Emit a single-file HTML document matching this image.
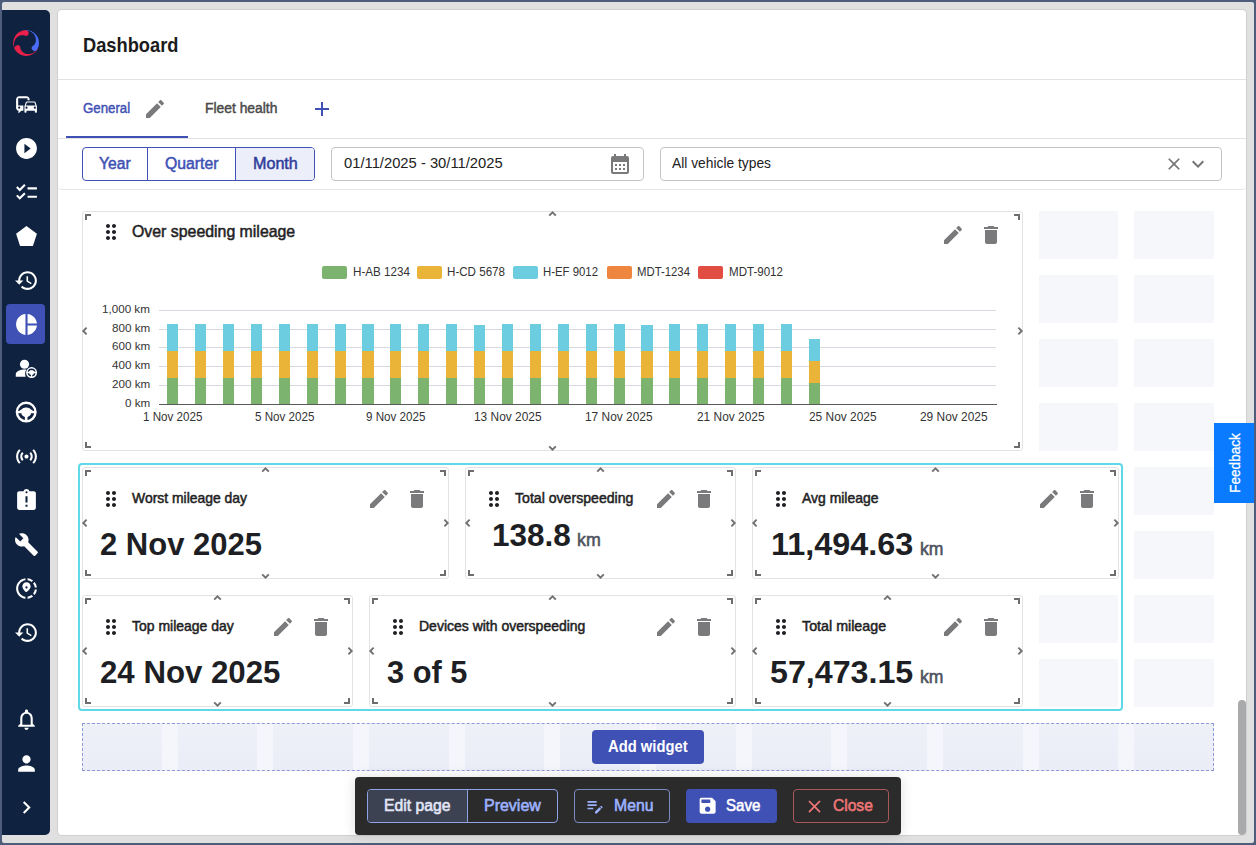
<!DOCTYPE html>
<html><head><meta charset="utf-8">
<style>
*{box-sizing:border-box;margin:0;padding:0}
html,body{width:1256px;height:845px;overflow:hidden;background:#4e5d7c;font-family:"Liberation Sans",sans-serif;}
.abs{position:absolute}
#frame{position:absolute;left:2px;top:2px;width:1252px;height:841px;background:#e0e0e0;border-radius:2px}
#side{position:absolute;left:2px;top:10px;width:48px;height:825px;background:#0f2240;border-radius:0 5px 5px 0}
#side svg{position:absolute;left:11.5px;width:25px;height:25px;fill:#fff}
#side .act{position:absolute;left:4px;top:294px;width:39px;height:40px;background:#3f51b5;border-radius:4px}
#card{position:absolute;left:58px;top:10px;width:1188px;height:825px;background:#fff;border-radius:4px;box-shadow:0 0 0 1px #cfcfcf;overflow:hidden}
.hl{position:absolute;height:1px;background:#e3e3e3}
.t{position:absolute;white-space:nowrap;line-height:1}
.t{position:absolute;white-space:nowrap;line-height:1;transform-origin:0 0}.b{position:absolute}.ic{position:absolute}.ov{position:absolute;left:0;top:0;pointer-events:none}</style></head><body>
<div id="frame"></div>
<div id="side">
  <!-- logo -->
  <svg style="left:11px;top:20px;width:26px;height:26px" viewBox="0 0 26 26">
    <path d="M2.41 20.21 L2.04 19.63 L1.70 19.04 L1.39 18.42 L1.12 17.79 L0.88 17.15 L0.68 16.49 L0.51 15.83 L0.38 15.15 L0.28 14.47 L0.22 13.79 L0.20 13.10 L0.21 12.41 L0.26 11.73 L0.35 11.05 L0.47 10.37 L0.63 9.70 L0.82 9.05 L1.05 8.40 L1.31 7.76 L1.61 7.14 L1.93 6.54 L2.29 5.96 L2.68 5.39 L3.10 4.85 L3.55 4.33 L4.03 3.83 L4.53 3.36 L5.05 2.92 L5.60 2.50 L6.17 2.12 L6.76 1.77 L7.36 1.45 L7.99 1.16 L8.62 0.90 L9.27 0.68 L9.94 0.49 L10.61 0.34 L11.28 0.23 L11.96 0.15 L12.65 0.11 A3.00 3.00 0 0 1 12.86 6.10 L12.47 5.87 L12.06 5.67 L11.62 5.50 L11.17 5.36 L10.69 5.25 L10.20 5.17 L9.70 5.13 L9.19 5.13 L8.68 5.17 L8.15 5.24 L7.63 5.35 L7.11 5.50 L6.59 5.68 L6.08 5.91 L5.58 6.17 L5.10 6.47 L4.63 6.81 L4.17 7.18 L3.74 7.59 L3.33 8.02 L2.95 8.49 L2.59 8.99 L2.27 9.51 L1.98 10.06 L1.72 10.63 L1.50 11.22 L1.31 11.83 L1.16 12.46 L1.06 13.09 L0.99 13.74 L0.97 14.39 L0.99 15.05 L1.05 15.71 L1.15 16.36 L1.30 17.01 L1.48 17.65 L1.72 18.27 L1.99 18.88 L2.30 19.48 L2.65 20.05 Z" fill="#e8204a"/>
    <path d="M12.65 0.11 L13.34 0.10 L14.02 0.13 L14.71 0.20 L15.38 0.30 L16.06 0.44 L16.72 0.62 L17.37 0.83 L18.02 1.07 L18.64 1.35 L19.26 1.66 L19.85 2.01 L20.43 2.38 L20.98 2.79 L21.51 3.22 L22.02 3.68 L22.50 4.17 L22.96 4.68 L23.39 5.22 L23.79 5.78 L24.16 6.36 L24.50 6.95 L24.80 7.57 L25.07 8.20 L25.31 8.84 L25.52 9.50 L25.68 10.16 L25.82 10.84 L25.91 11.52 L25.98 12.20 L26.00 12.89 L25.99 13.57 L25.94 14.26 L25.85 14.94 L25.73 15.62 L25.57 16.28 L25.38 16.94 L25.16 17.59 L24.89 18.23 L24.60 18.85 L24.27 19.45 A3.00 3.00 0 0 1 19.08 16.45 L19.48 16.24 L19.87 16.00 L20.25 15.72 L20.61 15.41 L20.95 15.07 L21.27 14.69 L21.57 14.29 L21.84 13.86 L22.09 13.40 L22.30 12.92 L22.49 12.42 L22.64 11.90 L22.75 11.36 L22.83 10.81 L22.87 10.24 L22.88 9.67 L22.84 9.09 L22.77 8.51 L22.65 7.93 L22.50 7.35 L22.30 6.78 L22.07 6.22 L21.80 5.66 L21.49 5.12 L21.14 4.60 L20.75 4.10 L20.34 3.62 L19.88 3.17 L19.40 2.74 L18.89 2.34 L18.35 1.97 L17.78 1.64 L17.19 1.35 L16.58 1.09 L15.96 0.87 L15.32 0.69 L14.66 0.55 L14.00 0.46 L13.33 0.41 L12.66 0.41 Z" fill="#4a6cf7"/>
    <path d="M24.69 18.65 L24.38 19.26 L24.03 19.86 L23.65 20.43 L23.24 20.98 L22.80 21.51 L22.33 22.01 L21.84 22.49 L21.32 22.94 L20.78 23.36 L20.22 23.76 L19.64 24.12 L19.04 24.45 L18.42 24.75 L17.79 25.02 L17.14 25.25 L16.48 25.45 L15.82 25.61 L15.14 25.74 L14.46 25.83 L13.78 25.88 L13.09 25.90 L12.40 25.88 L11.72 25.83 L11.04 25.73 L10.36 25.61 L9.70 25.44 L9.04 25.24 L8.39 25.01 L7.76 24.74 L7.14 24.44 L6.54 24.11 L5.96 23.74 L5.40 23.35 L4.86 22.93 L4.34 22.47 L3.85 21.99 L3.39 21.49 L2.95 20.96 L2.54 20.41 L2.16 19.84 A3.00 3.00 0 0 1 7.25 16.66 L7.24 17.11 L7.27 17.57 L7.34 18.03 L7.45 18.50 L7.59 18.96 L7.77 19.42 L7.99 19.87 L8.24 20.32 L8.53 20.75 L8.85 21.16 L9.21 21.56 L9.60 21.94 L10.02 22.29 L10.47 22.62 L10.95 22.92 L11.45 23.19 L11.98 23.43 L12.52 23.64 L13.09 23.81 L13.67 23.95 L14.27 24.05 L14.88 24.10 L15.49 24.12 L16.12 24.10 L16.74 24.04 L17.36 23.94 L17.98 23.79 L18.60 23.61 L19.20 23.38 L19.79 23.11 L20.37 22.81 L20.93 22.47 L21.47 22.09 L21.98 21.67 L22.47 21.22 L22.93 20.74 L23.36 20.22 L23.75 19.68 L24.11 19.11 L24.42 18.52 Z" fill="#e8204a"/>
  </svg>
  <div class="act"></div>
  <!-- commute -->
  <svg style="top:81.5px" viewBox="0 0 24 24"><path d="M12 4H5C3.34 4 2 5.34 2 7v8c0 1.66 1.34 3 3 3l-1 1v1h1l2-2.03L9 18v-5H4V5.98L13 6v2h2V7c0-1.66-1.34-3-3-3zM5 14c.55 0 1 .45 1 1s-.45 1-1 1-1-.45-1-1 .45-1 1-1zm15.57-4.34c-.14-.4-.52-.66-.97-.66h-7.19c-.46 0-.83.26-.98.66L10 13.77l.01 5.51c0 .38.31.72.69.72h.62c.38 0 .68-.38.68-.76V18h8v1.24c0 .38.31.76.69.76h.61c.38 0 .69-.34.69-.72l.01-1.37v-4.14l-1.43-4.11zm-8.16.34h7.19l1.03 3h-9.25l1.03-3zM12 16c-.55 0-1-.45-1-1s.45-1 1-1 1 .45 1 1-.45 1-1 1zm8 0c-.55 0-1-.45-1-1s.45-1 1-1 1 .45 1 1-.45 1-1 1z"/></svg>
  <!-- play -->
  <svg style="top:125.5px" viewBox="0 0 24 24"><path d="M12 2C6.48 2 2 6.48 2 12s4.48 10 10 10 10-4.48 10-10S17.52 2 12 2zm-2 14.5v-9l6 4.5-6 4.5z"/></svg>
  <!-- checklist -->
  <svg style="top:169.5px" viewBox="0 0 24 24"><path d="M22,7h-9v2h9V7z M22,15h-9v2h9V15z M5.54,11L2,7.46l1.41-1.41l2.12,2.12l4.24-4.24l1.41,1.41L5.54,11z M5.54,19L2,15.46l1.41-1.41 l2.12,2.12l4.24-4.24l1.41,1.41L5.54,19z"/></svg>
  <!-- pentagon -->
  <svg style="top:213.5px" viewBox="0 0 24 24"><path d="M22 9.24 12 2 2 9.24 5.82 21h12.36L22 9.24z"/></svg>
  <!-- history -->
  <svg style="top:257.5px" viewBox="0 0 24 24"><path d="M13 3c-4.97 0-9 4.03-9 9H1l3.89 3.89.07.14L9 12H6c0-3.87 3.13-7 7-7s7 3.13 7 7-3.13 7-7 7c-1.93 0-3.68-.79-4.94-2.06l-1.42 1.42C8.27 19.99 10.51 21 13 21c4.97 0 9-4.03 9-9s-4.03-9-9-9zm-1 5v5l4.28 2.54.72-1.21-3.5-2.08V8H12z"/></svg>
  <!-- pie -->
  <svg style="top:301.5px" viewBox="0 0 24 24"><path d="M11 2v20c-5.07-.5-9-4.79-9-10s3.93-9.5 9-10zm2.03 0v8.99H22c-.47-4.74-4.24-8.52-8.97-8.99zm0 11.01V22c4.74-.47 8.5-4.25 8.970-8.99h-8.97z"/></svg>
  <!-- person + wheel -->
  <svg style="top:345.5px" viewBox="0 0 24 24"><circle cx="10.1" cy="7.95" r="4.4"/><path d="M1.7 19.8v-2.2c0-2.9 4.6-4.7 8.3-4.7.6 0 1.3.05 2 .15-.9 1.2-1.3 2.6-1.3 4.1 0 .9.2 1.8.5 2.65z"/><circle cx="16.9" cy="15.85" r="4.5" fill="none" stroke="#fff" stroke-width="1.5"/><g transform="translate(16.9 15.85) scale(0.5) translate(-11.7 -11.6)"><path d="M4.9 10.6L9.1 7.7H14.3L18.5 10.6z M2.5 10.5H21V12.8H2.5z M10.45 12h2.5v9h-2.5z"/><circle cx="11.7" cy="11.9" r="4.7"/></g></svg>
  <!-- steering wheel -->
  <svg style="top:389.5px" viewBox="0 0 24 24"><circle cx="11.7" cy="11.6" r="8.95" fill="none" stroke="#fff" stroke-width="2.3"/><path d="M4.9 10.6L9.1 7.7H14.3L18.5 10.6z M2.5 10.5H21V12.8H2.5z M10.45 12h2.5v9h-2.5z"/><circle cx="11.7" cy="11.9" r="4.7"/></svg>
  <!-- sensors -->
  <svg style="top:433.5px" viewBox="0 0 24 24"><path d="M7.76 16.24C6.67 15.160 6 13.66 6 12s.67-3.16 1.76-4.24l1.42 1.42C8.45 9.9 8 10.9 8 12c0 1.1.45 2.1 1.170 2.83l-1.41 1.41zm8.48 0C17.33 15.16 18 13.66 18 12s-.67-3.16-1.76-4.24l-1.42 1.42C15.55 9.9 16 10.9 16 12c0 1.1-.45 2.1-1.17 2.83l1.41 1.41zM12 10c-1.1 0-2 .9-2 2s.9 2 2 2 2-.9 2-2-.9-2-2-2zm8 2c0 2.21-.9 4.21-2.35 5.65l1.42 1.42C20.88 17.26 22 14.76 22 12s-1.12-5.26-2.93-7.07l-1.42 1.42C19.1 7.79 20 9.79 20 12zM6.35 6.35L4.93 4.93C3.12 6.74 2 9.24 2 12s1.12 5.26 2.93 7.07l1.42-1.42C4.9 16.21 4 14.21 4 12s.9-4.21 2.35-5.65z"/></svg>
  <!-- assignment late -->
  <svg style="top:477.5px" viewBox="0 0 24 24"><path d="M19 3h-4.18C14.4 1.84 13.3 1 12 1c-1.3 0-2.4.84-2.82 2H5c-1.1 0-2 .9-2 2v14c0 1.1.9 2 2 2h14c1.1 0 2-.9 2-2V5c0-1.1-.9-2-2-2zm-6 15h-2v-2h2v2zm0-4h-2V8h2v6zm-1-9c-.55 0-1-.45-1-1s.45-1 1-1 1 .45 1 1-.45 1-1 1z"/></svg>
  <!-- build -->
  <svg style="top:521.5px" viewBox="0 0 24 24"><path d="M22.7 19l-9.1-9.1c.9-2.3.4-5-1.5-6.9-2-2-5-2.4-7.4-1.3L9 6 6 9 1.6 4.7C.4 7.1.9 10.1 2.9 12.1c1.9 1.9 4.6 2.4 6.9 1.5l9.1 9.1c.4.4 1 .4 1.4 0l2.3-2.3c.5-.4.5-1.1.1-1.4z"/></svg>
  <!-- share location -->
  <svg style="top:565.5px" viewBox="0 0 24 24"><path d="M13.02,19.93v2.02c2.01-0.2,3.84-1,5.32-2.21l-1.42-1.43C15.81,19.17,14.48,19.75,13.02,19.93z M4.03,12c0-4.05,3.03-7.41,6.95-7.93V2.05C5.95,2.58,2.03,6.84,2.03,12c0,5.16,3.920,9.42,8.95,9.95v-2.02C7.06,19.41,4.03,16.05,4.03,12z M19.95,11h2.02c-0.2-2.01-1-3.84-2.21-5.32l-1.43,1.43C19.17,8.19,19.75,9.52,19.95,11z M18.34,4.26c-1.48-1.21-3.32-2.01-5.32-2.21v2.02c1.46,0.18,2.79,0.76,3.9,1.62L18.34,4.26z M18.33,16.9l1.43,1.42c1.21-1.48,2.01-3.31,2.21-5.32h-2.02C19.77,14.48,19.19,15.81,18.33,16.9z M16,10.1C16,7.96,14.33,6,12,6s-4,1.96-4,4.1c0,1.28,0.98,3.12,3,5.01c0.4,0.37,1.03,0.37,1.43,0C15.02,13.22,16,11.38,16,10.1z M12,12c-0.59,0-1.07-0.48-1.07-1.07c0-0.59,0.48-1.07,1.07-1.07s1.07,0.48,1.07,1.07C13.07,11.52,12.59,12,12,12z"/></svg>
  <!-- history 2 -->
  <svg style="top:609.5px" viewBox="0 0 24 24"><path d="M13 3c-4.97 0-9 4.03-9 9H1l3.89 3.89.07.14L9 12H6c0-3.87 3.13-7 7-7s7 3.13 7 7-3.13 7-7 7c-1.93 0-3.68-.79-4.94-2.06l-1.42 1.42C8.27 19.99 10.51 21 13 21c4.97 0 9-4.03 9-9s-4.03-9-9-9zm-1 5v5l4.28 2.54.72-1.21-3.5-2.08V8H12z"/></svg>
  <!-- bell -->
  <svg style="top:696.5px" viewBox="0 0 24 24"><path d="M12 22c1.1 0 2-.9 2-2h-4c0 1.1.89 2 2 2zm6-6v-5c0-3.07-1.64-5.64-4.5-6.32V4c0-.83-.67-1.5-1.5-1.5s-1.5.67-1.5 1.5v.68C7.63 5.36 6 7.92 6 11v5l-2 2v1h16v-1l-2-2zm-2 1H8v-6c0-2.48 1.51-4.5 4-4.5s4 2.02 4 4.5v6z"/></svg>
  <!-- person -->
  <svg style="top:740.5px" viewBox="0 0 24 24"><path d="M12 12c2.21 0 4-1.79 4-4s-1.79-4-4-4-4 1.79-4 4 1.79 4 4 4zm0 2c-2.67 0-8 1.34-8 4v2h16v-2c0-2.66-5.33-4-8-4z"/></svg>
  <!-- chevron -->
  <svg style="top:784.5px" viewBox="0 0 24 24"><path d="M10 6L8.59 7.41 13.17 12l-4.58 4.59L10 18l6-6z"/></svg>
</div>
<div id="card"></div>
<div class="b" style="left:58.00px;top:79.00px;width:1188.00px;height:1.00px;background:#e2e2e2"></div>
<div class="t" style="left:82.50px;top:34.00px;font-size:21.00px;color:#1b1b1b;font-weight:700;transform:scaleX(0.8704);">Dashboard</div>
<div class="t" style="left:82.60px;top:101.00px;font-size:14.75px;color:#3f51b5;font-weight:400;transform:scaleX(0.8989);-webkit-text-stroke:0.45px #3f51b5;">General</div>
<svg class="ic" style="left:143.20px;top:96.90px;width:24.00px;height:24.00px;" viewBox="0 0 24 24"><path fill="#7a7a7c" d="M3 17.25V21h3.75L17.81 9.94l-3.75-3.75L3 17.25zM20.71 7.04c.39-.39.39-1.02 0-1.41l-2.34-2.34c-.39-.39-1.02-.39-1.41 0l-1.83 1.830 3.75 3.75 1.83-1.83z"/></svg>
<div class="b" style="left:66.00px;top:136.00px;width:122.00px;height:2.00px;background:#3f51b5"></div>
<div class="b" style="left:58.00px;top:138.00px;width:1188.00px;height:1.00px;background:#e2e2e2"></div>
<div class="t" style="left:205.20px;top:101.00px;font-size:14.25px;color:#4a4a4a;font-weight:400;transform:scaleX(0.9724);-webkit-text-stroke:0.45px #4a4a4a;">Fleet health</div>
<svg class="ic" style="left:310.00px;top:97.00px;width:24.00px;height:24.00px;" viewBox="0 0 24 24"><path fill="#3f51b5" d="M19 13h-6v6h-2v-6H5v-2h6V5h2v6h6v2z"/></svg>
<div class="b" style="left:82.00px;top:147.00px;width:233.00px;height:34.00px;border:1px solid #3f51b5;border-radius:4px;background:#fff"></div>
<div class="b" style="left:236.00px;top:148.00px;width:78.00px;height:32.00px;background:#eceefa;border-radius:0 3px 3px 0"></div>
<div class="b" style="left:147.00px;top:148.00px;width:1.00px;height:32.00px;background:#3f51b5"></div>
<div class="b" style="left:235.00px;top:148.00px;width:1.00px;height:32.00px;background:#3f51b5"></div>
<div class="t" style="left:99.40px;top:156.00px;font-size:16.00px;color:#3f51b5;font-weight:400;transform:scaleX(0.9777);-webkit-text-stroke:0.50px #3f51b5;">Year</div>
<div class="t" style="left:165.00px;top:156.00px;font-size:16.00px;color:#3f51b5;font-weight:400;transform:scaleX(0.9864);-webkit-text-stroke:0.50px #3f51b5;">Quarter</div>
<div class="t" style="left:252.50px;top:156.00px;font-size:16.00px;color:#2f3d9a;font-weight:400;transform:scaleX(1.0072);-webkit-text-stroke:0.50px #2f3d9a;">Month</div>
<div class="b" style="left:331.00px;top:147.00px;width:313.00px;height:34.00px;border:1px solid #c4c4c4;border-radius:4px"></div>
<div class="t" style="left:343.60px;top:157.00px;font-size:13.75px;color:#222;font-weight:400;transform:scaleX(1.0737);">01/11/2025 - 30/11/2025</div>
<svg class="ic" style="left:608.00px;top:152.00px;width:24.00px;height:24.00px;" viewBox="0 0 24 24"><path fill="#7a7a7c" d="M19 4h-1V2h-2v2H8V2H6v2H5c-1.11 0-1.99.9-1.99 2L3 20c0 1.1.89 2 2 2h14c1.1 0 2-.9 2-2V6c0-1.1-.9-2-2-2zm0 16H5V10h14v10zM9 14H7v-2h2v2zm4 0h-2v-2h2v2zm4 0h-2v-2h2v2zm-8 4H7v-2h2v2zm4 0h-2v-2h2v2zm4 0h-2v-2h2v2z"/></svg>
<div class="b" style="left:660.00px;top:147.00px;width:562.00px;height:34.00px;border:1px solid #c4c4c4;border-radius:4px"></div>
<div class="t" style="left:672.20px;top:157.00px;font-size:13.75px;color:#222;font-weight:400;transform:scaleX(1.0042);">All vehicle types</div>
<svg class="ic" style="left:1164.00px;top:154.00px;width:20.00px;height:20.00px;" viewBox="0 0 24 24"><path fill="#757575" d="M19 6.41L17.59 5 12 10.59 6.41 5 5 6.41 10.59 12 5 17.59 6.41 19 12 13.41 17.590 19 19 17.59 13.41 12z"/></svg>
<svg class="ic" style="left:1186.00px;top:152.00px;width:24.00px;height:24.00px;" viewBox="0 0 24 24"><path fill="#757575" d="M7.41 8.59L12 13.17l4.59-4.58L18 10l-6 6-6-6 1.41-1.41z"/></svg>
<div class="b" style="left:58.00px;top:170.00px;width:1188.00px;height:20.00px;border-bottom:1px solid #e6e6e6;border-radius:0 0 4px 4px"></div>
<div class="b" style="left:1039.00px;top:211.00px;width:79.00px;height:48.00px;background:#f6f7fb"></div>
<div class="b" style="left:1134.00px;top:211.00px;width:80.00px;height:48.00px;background:#f6f7fb"></div>
<div class="b" style="left:1039.00px;top:275.00px;width:79.00px;height:48.00px;background:#f6f7fb"></div>
<div class="b" style="left:1134.00px;top:275.00px;width:80.00px;height:48.00px;background:#f6f7fb"></div>
<div class="b" style="left:1039.00px;top:339.00px;width:79.00px;height:48.00px;background:#f6f7fb"></div>
<div class="b" style="left:1134.00px;top:339.00px;width:80.00px;height:48.00px;background:#f6f7fb"></div>
<div class="b" style="left:1039.00px;top:403.00px;width:79.00px;height:48.00px;background:#f6f7fb"></div>
<div class="b" style="left:1134.00px;top:403.00px;width:80.00px;height:48.00px;background:#f6f7fb"></div>
<div class="b" style="left:1134.00px;top:467.00px;width:80.00px;height:48.00px;background:#f6f7fb"></div>
<div class="b" style="left:1134.00px;top:531.00px;width:80.00px;height:48.00px;background:#f6f7fb"></div>
<div class="b" style="left:1039.00px;top:595.00px;width:79.00px;height:48.00px;background:#f6f7fb"></div>
<div class="b" style="left:1134.00px;top:595.00px;width:80.00px;height:48.00px;background:#f6f7fb"></div>
<div class="b" style="left:1039.00px;top:659.00px;width:79.00px;height:48.00px;background:#f6f7fb"></div>
<div class="b" style="left:1134.00px;top:659.00px;width:80.00px;height:48.00px;background:#f6f7fb"></div>
<div class="b" style="left:82.00px;top:723.00px;width:1132.00px;height:48.00px;background:#f5f6fb"></div>
<div class="b" style="left:82.00px;top:723.00px;width:80.00px;height:48.00px;background:linear-gradient(#eff1f9,#eaecf7)"></div>
<div class="b" style="left:178.00px;top:723.00px;width:79.00px;height:48.00px;background:linear-gradient(#eff1f9,#eaecf7)"></div>
<div class="b" style="left:273.00px;top:723.00px;width:80.00px;height:48.00px;background:linear-gradient(#eff1f9,#eaecf7)"></div>
<div class="b" style="left:369.00px;top:723.00px;width:80.00px;height:48.00px;background:linear-gradient(#eff1f9,#eaecf7)"></div>
<div class="b" style="left:465.00px;top:723.00px;width:79.00px;height:48.00px;background:linear-gradient(#eff1f9,#eaecf7)"></div>
<div class="b" style="left:560.00px;top:723.00px;width:80.00px;height:48.00px;background:linear-gradient(#eff1f9,#eaecf7)"></div>
<div class="b" style="left:656.00px;top:723.00px;width:80.00px;height:48.00px;background:linear-gradient(#eff1f9,#eaecf7)"></div>
<div class="b" style="left:752.00px;top:723.00px;width:79.00px;height:48.00px;background:linear-gradient(#eff1f9,#eaecf7)"></div>
<div class="b" style="left:847.00px;top:723.00px;width:80.00px;height:48.00px;background:linear-gradient(#eff1f9,#eaecf7)"></div>
<div class="b" style="left:943.00px;top:723.00px;width:80.00px;height:48.00px;background:linear-gradient(#eff1f9,#eaecf7)"></div>
<div class="b" style="left:1039.00px;top:723.00px;width:79.00px;height:48.00px;background:linear-gradient(#eff1f9,#eaecf7)"></div>
<div class="b" style="left:1134.00px;top:723.00px;width:80.00px;height:48.00px;background:linear-gradient(#eff1f9,#eaecf7)"></div>
<div class="b" style="left:82.00px;top:723.00px;width:1132.00px;height:48.00px;border:1px dashed #8f99d8"></div>
<div class="b" style="left:78.00px;top:463.00px;width:1045.00px;height:248.00px;border:2px solid #5fd9e8;border-radius:4px"></div>
<div class="b" style="left:82.00px;top:211.00px;width:941.00px;height:240.00px;border:1px solid #e3e3e3;border-radius:3px;background:#fff"></div>
<svg class="ov" width="1256" height="845"><path d="M86.0 220.0 V215.0 H91.0 M1014.0 215.0 H1019.0 V220.0 M86.0 442.0 V447.0 H91.0 M1014.0 447.0 H1019.0 V442.0" fill="none" stroke="#6d6d6d" stroke-width="2" stroke-linecap="butt"/><path d="M549.20 215.60 L552.50 212.30 L555.80 215.60 M549.20 446.40 L552.50 449.70 L555.80 446.40 M86.60 327.70 L83.30 331.00 L86.60 334.30 M1018.40 327.70 L1021.70 331.00 L1018.40 334.30" fill="none" stroke="#707070" stroke-width="1.9"/></svg>
<svg class="ic" style="left:98.70px;top:220.10px;width:24.00px;height:24.00px;" viewBox="0 0 24 24"><path fill="#1f1f24" d="M11 18c0 1.1-.9 2-2 2s-2-.9-2-2 .9-2 2-2 2 .9 2 2zm-2-8c-1.1 0-2 .9-2 2s.9 2 2 2 2-.9 2-2-.9-2-2-2zm0-6c-1.1 0-2 .9-2 2s.9 2 2 2 2-.9 2-2-.9-2-2-2zm6 4c1.1 0 2-.9 2-2s-.9-2-2-2-2 .9-2 2 .9 2 2 2zm0 2c-1.1 0-2 .9-2 2s.9 2 2 2 2-.9 2-2-.9-2-2-2zm0 6c-1.1 0-2 .9-2 2s.9 2 2 2 2-.9 2-2-.9-2-2-2z"/></svg>
<div class="t" style="left:131.50px;top:224.00px;font-size:15.75px;color:#1f1f24;font-weight:400;transform:scaleX(1.0075);-webkit-text-stroke:0.50px #1f1f24;">Over speeding mileage</div>
<svg class="ic" style="left:941.00px;top:223.00px;width:24.00px;height:24.00px;" viewBox="0 0 24 24"><path fill="#7a7a7c" d="M3 17.25V21h3.75L17.81 9.94l-3.75-3.75L3 17.25zM20.71 7.04c.39-.39.39-1.02 0-1.41l-2.34-2.34c-.39-.39-1.02-.39-1.41 0l-1.83 1.830 3.75 3.75 1.83-1.83z"/></svg>
<svg class="ic" style="left:979.00px;top:223.00px;width:24.00px;height:24.00px;" viewBox="0 0 24 24"><path fill="#7a7a7c" d="M6 19c0 1.1.9 2 2 2h8c1.1 0 2-.9 2-2V7H6v12zM19 4h-3.5l-1-1h-5l-1 1H5v2h14V4z"/></svg>
<div class="b" style="left:82.00px;top:467.00px;width:367.00px;height:112.00px;border:1px solid #e3e3e3;border-radius:3px;background:#fff"></div>
<svg class="ov" width="1256" height="845"><path d="M86.0 476.0 V471.0 H91.0 M440.0 471.0 H445.0 V476.0 M86.0 570.0 V575.0 H91.0 M440.0 575.0 H445.0 V570.0" fill="none" stroke="#6d6d6d" stroke-width="2" stroke-linecap="butt"/><path d="M262.20 471.60 L265.50 468.30 L268.80 471.60 M262.20 574.40 L265.50 577.70 L268.80 574.40 M86.60 519.70 L83.30 523.00 L86.60 526.30 M444.40 519.70 L447.70 523.00 L444.40 526.30" fill="none" stroke="#707070" stroke-width="1.9"/></svg>
<svg class="ic" style="left:98.70px;top:486.70px;width:24.00px;height:24.00px;" viewBox="0 0 24 24"><path fill="#1f1f24" d="M11 18c0 1.1-.9 2-2 2s-2-.9-2-2 .9-2 2-2 2 .9 2 2zm-2-8c-1.1 0-2 .9-2 2s.9 2 2 2 2-.9 2-2-.9-2-2-2zm0-6c-1.1 0-2 .9-2 2s.9 2 2 2 2-.9 2-2-.9-2-2-2zm6 4c1.1 0 2-.9 2-2s-.9-2-2-2-2 .9-2 2 .9 2 2 2zm0 2c-1.1 0-2 .9-2 2s.9 2 2 2 2-.9 2-2-.9-2-2-2zm0 6c-1.1 0-2 .9-2 2s.9 2 2 2 2-.9 2-2-.9-2-2-2z"/></svg>
<div class="t" style="left:131.50px;top:492.00px;font-size:13.75px;color:#1f1f24;font-weight:400;transform:scaleX(1.0128);-webkit-text-stroke:0.50px #1f1f24;">Worst mileage day</div>
<svg class="ic" style="left:367.00px;top:487.00px;width:24.00px;height:24.00px;" viewBox="0 0 24 24"><path fill="#7a7a7c" d="M3 17.25V21h3.75L17.81 9.94l-3.75-3.75L3 17.25zM20.71 7.04c.39-.39.39-1.02 0-1.41l-2.34-2.34c-.39-.39-1.02-.39-1.41 0l-1.83 1.830 3.75 3.75 1.83-1.83z"/></svg>
<svg class="ic" style="left:405.00px;top:487.00px;width:24.00px;height:24.00px;" viewBox="0 0 24 24"><path fill="#7a7a7c" d="M6 19c0 1.1.9 2 2 2h8c1.1 0 2-.9 2-2V7H6v12zM19 4h-3.5l-1-1h-5l-1 1H5v2h14V4z"/></svg>
<div class="b" style="left:465.00px;top:467.00px;width:271.00px;height:112.00px;border:1px solid #e3e3e3;border-radius:3px;background:#fff"></div>
<svg class="ov" width="1256" height="845"><path d="M469.0 476.0 V471.0 H474.0 M727.0 471.0 H732.0 V476.0 M469.0 570.0 V575.0 H474.0 M727.0 575.0 H732.0 V570.0" fill="none" stroke="#6d6d6d" stroke-width="2" stroke-linecap="butt"/><path d="M597.20 471.60 L600.50 468.30 L603.80 471.60 M597.20 574.40 L600.50 577.70 L603.80 574.40 M469.60 519.70 L466.30 523.00 L469.60 526.30 M731.40 519.70 L734.70 523.00 L731.40 526.30" fill="none" stroke="#707070" stroke-width="1.9"/></svg>
<svg class="ic" style="left:481.70px;top:487.00px;width:24.00px;height:24.00px;" viewBox="0 0 24 24"><path fill="#1f1f24" d="M11 18c0 1.1-.9 2-2 2s-2-.9-2-2 .9-2 2-2 2 .9 2 2zm-2-8c-1.1 0-2 .9-2 2s.9 2 2 2 2-.9 2-2-.9-2-2-2zm0-6c-1.1 0-2 .9-2 2s.9 2 2 2 2-.9 2-2-.9-2-2-2zm6 4c1.1 0 2-.9 2-2s-.9-2-2-2-2 .9-2 2 .9 2 2 2zm0 2c-1.1 0-2 .9-2 2s.9 2 2 2 2-.9 2-2-.9-2-2-2zm0 6c-1.1 0-2 .9-2 2s.9 2 2 2 2-.9 2-2-.9-2-2-2z"/></svg>
<div class="t" style="left:514.50px;top:492.00px;font-size:13.75px;color:#1f1f24;font-weight:400;transform:scaleX(1.0257);-webkit-text-stroke:0.50px #1f1f24;">Total overspeeding</div>
<svg class="ic" style="left:654.00px;top:487.00px;width:24.00px;height:24.00px;" viewBox="0 0 24 24"><path fill="#7a7a7c" d="M3 17.25V21h3.75L17.81 9.94l-3.75-3.75L3 17.25zM20.71 7.04c.39-.39.39-1.02 0-1.41l-2.34-2.34c-.39-.39-1.02-.39-1.41 0l-1.83 1.830 3.75 3.75 1.83-1.83z"/></svg>
<svg class="ic" style="left:692.00px;top:487.00px;width:24.00px;height:24.00px;" viewBox="0 0 24 24"><path fill="#7a7a7c" d="M6 19c0 1.1.9 2 2 2h8c1.1 0 2-.9 2-2V7H6v12zM19 4h-3.5l-1-1h-5l-1 1H5v2h14V4z"/></svg>
<div class="b" style="left:752.00px;top:467.00px;width:367.00px;height:112.00px;border:1px solid #e3e3e3;border-radius:3px;background:#fff"></div>
<svg class="ov" width="1256" height="845"><path d="M756.0 476.0 V471.0 H761.0 M1110.0 471.0 H1115.0 V476.0 M756.0 570.0 V575.0 H761.0 M1110.0 575.0 H1115.0 V570.0" fill="none" stroke="#6d6d6d" stroke-width="2" stroke-linecap="butt"/><path d="M932.20 471.60 L935.50 468.30 L938.80 471.60 M932.20 574.40 L935.50 577.70 L938.80 574.40 M756.60 519.70 L753.30 523.00 L756.60 526.30 M1114.40 519.70 L1117.70 523.00 L1114.40 526.30" fill="none" stroke="#707070" stroke-width="1.9"/></svg>
<svg class="ic" style="left:768.70px;top:487.00px;width:24.00px;height:24.00px;" viewBox="0 0 24 24"><path fill="#1f1f24" d="M11 18c0 1.1-.9 2-2 2s-2-.9-2-2 .9-2 2-2 2 .9 2 2zm-2-8c-1.1 0-2 .9-2 2s.9 2 2 2 2-.9 2-2-.9-2-2-2zm0-6c-1.1 0-2 .9-2 2s.9 2 2 2 2-.9 2-2-.9-2-2-2zm6 4c1.1 0 2-.9 2-2s-.9-2-2-2-2 .9-2 2 .9 2 2 2zm0 2c-1.1 0-2 .9-2 2s.9 2 2 2 2-.9 2-2-.9-2-2-2zm0 6c-1.1 0-2 .9-2 2s.9 2 2 2 2-.9 2-2-.9-2-2-2z"/></svg>
<div class="t" style="left:801.50px;top:492.00px;font-size:13.75px;color:#1f1f24;font-weight:400;transform:scaleX(1.0143);-webkit-text-stroke:0.50px #1f1f24;">Avg mileage</div>
<svg class="ic" style="left:1037.00px;top:487.00px;width:24.00px;height:24.00px;" viewBox="0 0 24 24"><path fill="#7a7a7c" d="M3 17.25V21h3.75L17.81 9.94l-3.75-3.75L3 17.25zM20.71 7.04c.39-.39.39-1.02 0-1.41l-2.34-2.34c-.39-.39-1.02-.39-1.41 0l-1.83 1.830 3.75 3.75 1.83-1.83z"/></svg>
<svg class="ic" style="left:1075.00px;top:487.00px;width:24.00px;height:24.00px;" viewBox="0 0 24 24"><path fill="#7a7a7c" d="M6 19c0 1.1.9 2 2 2h8c1.1 0 2-.9 2-2V7H6v12zM19 4h-3.5l-1-1h-5l-1 1H5v2h14V4z"/></svg>
<div class="b" style="left:82.00px;top:595.00px;width:271.00px;height:112.00px;border:1px solid #e3e3e3;border-radius:3px;background:#fff"></div>
<svg class="ov" width="1256" height="845"><path d="M86.0 604.0 V599.0 H91.0 M344.0 599.0 H349.0 V604.0 M86.0 698.0 V703.0 H91.0 M344.0 703.0 H349.0 V698.0" fill="none" stroke="#6d6d6d" stroke-width="2" stroke-linecap="butt"/><path d="M214.20 599.60 L217.50 596.30 L220.80 599.60 M214.20 702.40 L217.50 705.70 L220.80 702.40 M86.60 647.70 L83.30 651.00 L86.60 654.30 M348.40 647.70 L351.70 651.00 L348.40 654.30" fill="none" stroke="#707070" stroke-width="1.9"/></svg>
<svg class="ic" style="left:98.70px;top:615.00px;width:24.00px;height:24.00px;" viewBox="0 0 24 24"><path fill="#1f1f24" d="M11 18c0 1.1-.9 2-2 2s-2-.9-2-2 .9-2 2-2 2 .9 2 2zm-2-8c-1.1 0-2 .9-2 2s.9 2 2 2 2-.9 2-2-.9-2-2-2zm0-6c-1.1 0-2 .9-2 2s.9 2 2 2 2-.9 2-2-.9-2-2-2zm6 4c1.1 0 2-.9 2-2s-.9-2-2-2-2 .9-2 2 .9 2 2 2zm0 2c-1.1 0-2 .9-2 2s.9 2 2 2 2-.9 2-2-.9-2-2-2zm0 6c-1.1 0-2 .9-2 2s.9 2 2 2 2-.9 2-2-.9-2-2-2z"/></svg>
<div class="t" style="left:131.50px;top:620.00px;font-size:13.75px;color:#1f1f24;font-weight:400;transform:scaleX(1.0160);-webkit-text-stroke:0.50px #1f1f24;">Top mileage day</div>
<svg class="ic" style="left:271.00px;top:615.00px;width:24.00px;height:24.00px;" viewBox="0 0 24 24"><path fill="#7a7a7c" d="M3 17.25V21h3.75L17.81 9.94l-3.75-3.75L3 17.25zM20.71 7.04c.39-.39.39-1.02 0-1.41l-2.34-2.34c-.39-.39-1.02-.39-1.41 0l-1.83 1.830 3.75 3.75 1.83-1.83z"/></svg>
<svg class="ic" style="left:309.00px;top:615.00px;width:24.00px;height:24.00px;" viewBox="0 0 24 24"><path fill="#7a7a7c" d="M6 19c0 1.1.9 2 2 2h8c1.1 0 2-.9 2-2V7H6v12zM19 4h-3.5l-1-1h-5l-1 1H5v2h14V4z"/></svg>
<div class="b" style="left:369.00px;top:595.00px;width:367.00px;height:112.00px;border:1px solid #e3e3e3;border-radius:3px;background:#fff"></div>
<svg class="ov" width="1256" height="845"><path d="M373.0 604.0 V599.0 H378.0 M727.0 599.0 H732.0 V604.0 M373.0 698.0 V703.0 H378.0 M727.0 703.0 H732.0 V698.0" fill="none" stroke="#6d6d6d" stroke-width="2" stroke-linecap="butt"/><path d="M549.20 599.60 L552.50 596.30 L555.80 599.60 M549.20 702.40 L552.50 705.70 L555.80 702.40 M373.60 647.70 L370.30 651.00 L373.60 654.30 M731.40 647.70 L734.70 651.00 L731.40 654.30" fill="none" stroke="#707070" stroke-width="1.9"/></svg>
<svg class="ic" style="left:385.70px;top:615.00px;width:24.00px;height:24.00px;" viewBox="0 0 24 24"><path fill="#1f1f24" d="M11 18c0 1.1-.9 2-2 2s-2-.9-2-2 .9-2 2-2 2 .9 2 2zm-2-8c-1.1 0-2 .9-2 2s.9 2 2 2 2-.9 2-2-.9-2-2-2zm0-6c-1.1 0-2 .9-2 2s.9 2 2 2 2-.9 2-2-.9-2-2-2zm6 4c1.1 0 2-.9 2-2s-.9-2-2-2-2 .9-2 2 .9 2 2 2zm0 2c-1.1 0-2 .9-2 2s.9 2 2 2 2-.9 2-2-.9-2-2-2zm0 6c-1.1 0-2 .9-2 2s.9 2 2 2 2-.9 2-2-.9-2-2-2z"/></svg>
<div class="t" style="left:418.50px;top:620.00px;font-size:13.75px;color:#1f1f24;font-weight:400;transform:scaleX(1.0174);-webkit-text-stroke:0.50px #1f1f24;">Devices with overspeeding</div>
<svg class="ic" style="left:654.00px;top:615.00px;width:24.00px;height:24.00px;" viewBox="0 0 24 24"><path fill="#7a7a7c" d="M3 17.25V21h3.75L17.81 9.94l-3.75-3.75L3 17.25zM20.71 7.04c.39-.39.39-1.02 0-1.41l-2.34-2.34c-.39-.39-1.02-.39-1.41 0l-1.83 1.830 3.75 3.75 1.83-1.83z"/></svg>
<svg class="ic" style="left:692.00px;top:615.00px;width:24.00px;height:24.00px;" viewBox="0 0 24 24"><path fill="#7a7a7c" d="M6 19c0 1.1.9 2 2 2h8c1.1 0 2-.9 2-2V7H6v12zM19 4h-3.5l-1-1h-5l-1 1H5v2h14V4z"/></svg>
<div class="b" style="left:752.00px;top:595.00px;width:271.00px;height:112.00px;border:1px solid #e3e3e3;border-radius:3px;background:#fff"></div>
<svg class="ov" width="1256" height="845"><path d="M756.0 604.0 V599.0 H761.0 M1014.0 599.0 H1019.0 V604.0 M756.0 698.0 V703.0 H761.0 M1014.0 703.0 H1019.0 V698.0" fill="none" stroke="#6d6d6d" stroke-width="2" stroke-linecap="butt"/><path d="M884.20 599.60 L887.50 596.30 L890.80 599.60 M884.20 702.40 L887.50 705.70 L890.80 702.40 M756.60 647.70 L753.30 651.00 L756.60 654.30 M1018.40 647.70 L1021.70 651.00 L1018.40 654.30" fill="none" stroke="#707070" stroke-width="1.9"/></svg>
<svg class="ic" style="left:768.70px;top:615.00px;width:24.00px;height:24.00px;" viewBox="0 0 24 24"><path fill="#1f1f24" d="M11 18c0 1.1-.9 2-2 2s-2-.9-2-2 .9-2 2-2 2 .9 2 2zm-2-8c-1.1 0-2 .9-2 2s.9 2 2 2 2-.9 2-2-.9-2-2-2zm0-6c-1.1 0-2 .9-2 2s.9 2 2 2 2-.9 2-2-.9-2-2-2zm6 4c1.1 0 2-.9 2-2s-.9-2-2-2-2 .9-2 2 .9 2 2 2zm0 2c-1.1 0-2 .9-2 2s.9 2 2 2 2-.9 2-2-.9-2-2-2zm0 6c-1.1 0-2 .9-2 2s.9 2 2 2 2-.9 2-2-.9-2-2-2z"/></svg>
<div class="t" style="left:801.50px;top:620.00px;font-size:13.75px;color:#1f1f24;font-weight:400;transform:scaleX(1.0384);-webkit-text-stroke:0.50px #1f1f24;">Total mileage</div>
<svg class="ic" style="left:941.00px;top:615.00px;width:24.00px;height:24.00px;" viewBox="0 0 24 24"><path fill="#7a7a7c" d="M3 17.25V21h3.75L17.81 9.94l-3.75-3.75L3 17.25zM20.71 7.04c.39-.39.39-1.02 0-1.41l-2.34-2.34c-.39-.39-1.02-.39-1.41 0l-1.83 1.830 3.75 3.75 1.83-1.83z"/></svg>
<svg class="ic" style="left:979.00px;top:615.00px;width:24.00px;height:24.00px;" viewBox="0 0 24 24"><path fill="#7a7a7c" d="M6 19c0 1.1.9 2 2 2h8c1.1 0 2-.9 2-2V7H6v12zM19 4h-3.5l-1-1h-5l-1 1H5v2h14V4z"/></svg>
<div class="t" style="left:100.00px;top:529.00px;font-size:31.50px;color:#1d1f24;font-weight:700;transform:scaleX(0.9843);">2 Nov 2025</div>
<div class="t" style="left:492.10px;top:520.00px;font-size:31.25px;color:#1d1f24;font-weight:700;transform:scaleX(1.0079);">138.8</div>
<div class="t" style="left:577.00px;top:530.00px;font-size:19.25px;color:#4f5361;font-weight:400;transform:scaleX(0.9261);-webkit-text-stroke:0.60px #4f5361;">km</div>
<div class="t" style="left:771.30px;top:529.00px;font-size:31.75px;color:#1d1f24;font-weight:700;transform:scaleX(1.0198);">11,494.63</div>
<div class="t" style="left:919.50px;top:539.00px;font-size:19.25px;color:#4f5361;font-weight:400;transform:scaleX(0.9144);-webkit-text-stroke:0.60px #4f5361;">km</div>
<div class="t" style="left:100.10px;top:656.00px;font-size:32.00px;color:#1d1f24;font-weight:700;transform:scaleX(0.9753);">24 Nov 2025</div>
<div class="t" style="left:386.70px;top:656.00px;font-size:32.00px;color:#1d1f24;font-weight:700;transform:scaleX(0.9614);">3 of 5</div>
<div class="t" style="left:770.30px;top:657.00px;font-size:31.75px;color:#1d1f24;font-weight:700;transform:scaleX(1.0142);">57,473.15</div>
<div class="t" style="left:919.50px;top:667.00px;font-size:19.25px;color:#4f5361;font-weight:400;transform:scaleX(0.9144);-webkit-text-stroke:0.60px #4f5361;">km</div>
<div class="b" style="left:321.90px;top:265.50px;width:25.00px;height:13.50px;background:#7cb46f;border-radius:2px"></div>
<div class="t" style="left:352.50px;top:266.00px;font-size:12.50px;color:#333;font-weight:400;transform:scaleX(0.9325);">H-AB 1234</div>
<div class="b" style="left:417.40px;top:265.50px;width:25.00px;height:13.50px;background:#e9b437;border-radius:2px"></div>
<div class="t" style="left:447.00px;top:266.00px;font-size:12.50px;color:#333;font-weight:400;transform:scaleX(0.9280);">H-CD 5678</div>
<div class="b" style="left:513.00px;top:265.50px;width:25.00px;height:13.50px;background:#6ccde0;border-radius:2px"></div>
<div class="t" style="left:543.00px;top:266.00px;font-size:12.50px;color:#333;font-weight:400;transform:scaleX(0.9100);">H-EF 9012</div>
<div class="b" style="left:606.50px;top:265.50px;width:25.00px;height:13.50px;background:#ef8640;border-radius:2px"></div>
<div class="t" style="left:637.00px;top:266.00px;font-size:12.50px;color:#333;font-weight:400;transform:scaleX(0.9079);">MDT-1234</div>
<div class="b" style="left:698.00px;top:265.50px;width:25.00px;height:13.50px;background:#e14c43;border-radius:2px"></div>
<div class="t" style="left:729.00px;top:266.00px;font-size:12.50px;color:#333;font-weight:400;transform:scaleX(0.9251);">MDT-9012</div>
<div class="b" style="left:159.00px;top:309.70px;width:837.00px;height:1.20px;background:#d6dae0"></div>
<div class="b" style="left:159.00px;top:328.50px;width:837.00px;height:1.20px;background:#d6dae0"></div>
<div class="b" style="left:159.00px;top:347.30px;width:837.00px;height:1.20px;background:#d6dae0"></div>
<div class="b" style="left:159.00px;top:366.10px;width:837.00px;height:1.20px;background:#d6dae0"></div>
<div class="b" style="left:159.00px;top:384.90px;width:837.00px;height:1.20px;background:#d6dae0"></div>
<div class="b" style="left:158.50px;top:403.50px;width:838.00px;height:1.30px;background:#5a5a5a"></div>
<div class="t" style="left:102.33px;top:303.00px;font-size:11.75px;color:#333;font-weight:400;transform:scaleX(0.9901);">1,000 km</div>
<div class="t" style="left:112.04px;top:322.00px;font-size:11.75px;color:#333;font-weight:400;transform:scaleX(0.9901);">800 km</div>
<div class="t" style="left:112.04px;top:340.00px;font-size:11.75px;color:#333;font-weight:400;transform:scaleX(0.9901);">600 km</div>
<div class="t" style="left:112.04px;top:359.00px;font-size:11.75px;color:#333;font-weight:400;transform:scaleX(0.9901);">400 km</div>
<div class="t" style="left:112.04px;top:378.00px;font-size:11.75px;color:#333;font-weight:400;transform:scaleX(0.9901);">200 km</div>
<div class="t" style="left:125.01px;top:397.00px;font-size:11.75px;color:#333;font-weight:400;transform:scaleX(0.9901);">0 km</div>
<div class="b" style="left:167.10px;top:377.67px;width:11.20px;height:26.33px;background:#7cb46f"></div>
<div class="b" style="left:167.10px;top:350.93px;width:11.20px;height:26.74px;background:#e9b437"></div>
<div class="b" style="left:167.10px;top:324.23px;width:11.20px;height:26.69px;background:#6ccde0"></div>
<div class="b" style="left:195.00px;top:377.85px;width:11.20px;height:26.15px;background:#7cb46f"></div>
<div class="b" style="left:195.00px;top:350.98px;width:11.20px;height:26.88px;background:#e9b437"></div>
<div class="b" style="left:195.00px;top:324.08px;width:11.20px;height:26.89px;background:#6ccde0"></div>
<div class="b" style="left:222.90px;top:377.56px;width:11.20px;height:26.44px;background:#7cb46f"></div>
<div class="b" style="left:222.90px;top:351.10px;width:11.20px;height:26.45px;background:#e9b437"></div>
<div class="b" style="left:222.90px;top:324.18px;width:11.20px;height:26.92px;background:#6ccde0"></div>
<div class="b" style="left:250.80px;top:377.67px;width:11.20px;height:26.33px;background:#7cb46f"></div>
<div class="b" style="left:250.80px;top:351.20px;width:11.20px;height:26.47px;background:#e9b437"></div>
<div class="b" style="left:250.80px;top:324.29px;width:11.20px;height:26.91px;background:#6ccde0"></div>
<div class="b" style="left:278.70px;top:377.97px;width:11.20px;height:26.03px;background:#7cb46f"></div>
<div class="b" style="left:278.70px;top:350.89px;width:11.20px;height:27.08px;background:#e9b437"></div>
<div class="b" style="left:278.70px;top:324.37px;width:11.20px;height:26.52px;background:#6ccde0"></div>
<div class="b" style="left:306.60px;top:377.63px;width:11.20px;height:26.37px;background:#7cb46f"></div>
<div class="b" style="left:306.60px;top:350.98px;width:11.20px;height:26.64px;background:#e9b437"></div>
<div class="b" style="left:306.60px;top:324.48px;width:11.20px;height:26.50px;background:#6ccde0"></div>
<div class="b" style="left:334.50px;top:377.81px;width:11.20px;height:26.19px;background:#7cb46f"></div>
<div class="b" style="left:334.50px;top:351.04px;width:11.20px;height:26.77px;background:#e9b437"></div>
<div class="b" style="left:334.50px;top:324.39px;width:11.20px;height:26.66px;background:#6ccde0"></div>
<div class="b" style="left:362.40px;top:377.58px;width:11.20px;height:26.42px;background:#7cb46f"></div>
<div class="b" style="left:362.40px;top:351.05px;width:11.20px;height:26.53px;background:#e9b437"></div>
<div class="b" style="left:362.40px;top:324.35px;width:11.20px;height:26.71px;background:#6ccde0"></div>
<div class="b" style="left:390.30px;top:377.70px;width:11.20px;height:26.30px;background:#7cb46f"></div>
<div class="b" style="left:390.30px;top:350.62px;width:11.20px;height:27.08px;background:#e9b437"></div>
<div class="b" style="left:390.30px;top:324.48px;width:11.20px;height:26.14px;background:#6ccde0"></div>
<div class="b" style="left:418.20px;top:377.79px;width:11.20px;height:26.21px;background:#7cb46f"></div>
<div class="b" style="left:418.20px;top:351.03px;width:11.20px;height:26.76px;background:#e9b437"></div>
<div class="b" style="left:418.20px;top:324.49px;width:11.20px;height:26.54px;background:#6ccde0"></div>
<div class="b" style="left:446.10px;top:377.91px;width:11.20px;height:26.09px;background:#7cb46f"></div>
<div class="b" style="left:446.10px;top:351.15px;width:11.20px;height:26.75px;background:#e9b437"></div>
<div class="b" style="left:446.10px;top:324.25px;width:11.20px;height:26.91px;background:#6ccde0"></div>
<div class="b" style="left:474.00px;top:377.95px;width:11.20px;height:26.05px;background:#7cb46f"></div>
<div class="b" style="left:474.00px;top:350.87px;width:11.20px;height:27.08px;background:#e9b437"></div>
<div class="b" style="left:474.00px;top:324.52px;width:11.20px;height:26.35px;background:#6ccde0"></div>
<div class="b" style="left:501.90px;top:377.99px;width:11.20px;height:26.01px;background:#7cb46f"></div>
<div class="b" style="left:501.90px;top:350.66px;width:11.20px;height:27.33px;background:#e9b437"></div>
<div class="b" style="left:501.90px;top:324.12px;width:11.20px;height:26.54px;background:#6ccde0"></div>
<div class="b" style="left:529.80px;top:377.66px;width:11.20px;height:26.34px;background:#7cb46f"></div>
<div class="b" style="left:529.80px;top:351.18px;width:11.20px;height:26.48px;background:#e9b437"></div>
<div class="b" style="left:529.80px;top:324.27px;width:11.20px;height:26.91px;background:#6ccde0"></div>
<div class="b" style="left:557.70px;top:377.86px;width:11.20px;height:26.14px;background:#7cb46f"></div>
<div class="b" style="left:557.70px;top:350.78px;width:11.20px;height:27.08px;background:#e9b437"></div>
<div class="b" style="left:557.70px;top:324.30px;width:11.20px;height:26.48px;background:#6ccde0"></div>
<div class="b" style="left:585.60px;top:377.74px;width:11.20px;height:26.26px;background:#7cb46f"></div>
<div class="b" style="left:585.60px;top:350.81px;width:11.20px;height:26.93px;background:#e9b437"></div>
<div class="b" style="left:585.60px;top:324.34px;width:11.20px;height:26.47px;background:#6ccde0"></div>
<div class="b" style="left:613.50px;top:377.84px;width:11.20px;height:26.16px;background:#7cb46f"></div>
<div class="b" style="left:613.50px;top:351.14px;width:11.20px;height:26.70px;background:#e9b437"></div>
<div class="b" style="left:613.50px;top:324.39px;width:11.20px;height:26.75px;background:#6ccde0"></div>
<div class="b" style="left:641.40px;top:378.01px;width:11.20px;height:25.99px;background:#7cb46f"></div>
<div class="b" style="left:641.40px;top:351.11px;width:11.20px;height:26.90px;background:#e9b437"></div>
<div class="b" style="left:641.40px;top:324.55px;width:11.20px;height:26.57px;background:#6ccde0"></div>
<div class="b" style="left:669.30px;top:377.89px;width:11.20px;height:26.11px;background:#7cb46f"></div>
<div class="b" style="left:669.30px;top:350.70px;width:11.20px;height:27.19px;background:#e9b437"></div>
<div class="b" style="left:669.30px;top:324.48px;width:11.20px;height:26.22px;background:#6ccde0"></div>
<div class="b" style="left:697.20px;top:378.03px;width:11.20px;height:25.97px;background:#7cb46f"></div>
<div class="b" style="left:697.20px;top:351.14px;width:11.20px;height:26.89px;background:#e9b437"></div>
<div class="b" style="left:697.20px;top:324.33px;width:11.20px;height:26.81px;background:#6ccde0"></div>
<div class="b" style="left:725.10px;top:377.91px;width:11.20px;height:26.09px;background:#7cb46f"></div>
<div class="b" style="left:725.10px;top:350.73px;width:11.20px;height:27.18px;background:#e9b437"></div>
<div class="b" style="left:725.10px;top:324.47px;width:11.20px;height:26.26px;background:#6ccde0"></div>
<div class="b" style="left:753.00px;top:377.84px;width:11.20px;height:26.16px;background:#7cb46f"></div>
<div class="b" style="left:753.00px;top:350.77px;width:11.20px;height:27.07px;background:#e9b437"></div>
<div class="b" style="left:753.00px;top:324.08px;width:11.20px;height:26.69px;background:#6ccde0"></div>
<div class="b" style="left:780.90px;top:377.98px;width:11.20px;height:26.02px;background:#7cb46f"></div>
<div class="b" style="left:780.90px;top:351.19px;width:11.20px;height:26.78px;background:#e9b437"></div>
<div class="b" style="left:780.90px;top:324.09px;width:11.20px;height:27.10px;background:#6ccde0"></div>
<div class="b" style="left:808.80px;top:383.00px;width:11.20px;height:21.00px;background:#7cb46f"></div>
<div class="b" style="left:808.80px;top:361.10px;width:11.20px;height:21.90px;background:#e9b437"></div>
<div class="b" style="left:808.80px;top:339.10px;width:11.20px;height:22.00px;background:#6ccde0"></div>
<div class="t" style="left:143.00px;top:411.00px;font-size:12.25px;color:#333;font-weight:400;transform:scaleX(0.9480);">1 Nov 2025</div>
<div class="t" style="left:254.60px;top:411.00px;font-size:12.25px;color:#333;font-weight:400;transform:scaleX(0.9480);">5 Nov 2025</div>
<div class="t" style="left:366.20px;top:411.00px;font-size:12.25px;color:#333;font-weight:400;transform:scaleX(0.9480);">9 Nov 2025</div>
<div class="t" style="left:473.75px;top:411.00px;font-size:12.25px;color:#333;font-weight:400;transform:scaleX(0.9718);">13 Nov 2025</div>
<div class="t" style="left:585.35px;top:411.00px;font-size:12.25px;color:#333;font-weight:400;transform:scaleX(0.9718);">17 Nov 2025</div>
<div class="t" style="left:696.95px;top:411.00px;font-size:12.25px;color:#333;font-weight:400;transform:scaleX(0.9718);">21 Nov 2025</div>
<div class="t" style="left:808.55px;top:411.00px;font-size:12.25px;color:#333;font-weight:400;transform:scaleX(0.9718);">25 Nov 2025</div>
<div class="t" style="left:920.15px;top:411.00px;font-size:12.25px;color:#333;font-weight:400;transform:scaleX(0.9718);">29 Nov 2025</div>
<div class="b" style="left:592.00px;top:730.00px;width:112.00px;height:34.00px;background:#3f51b5;border-radius:4px"></div>
<div class="t" style="left:608.40px;top:739.00px;font-size:16.00px;color:#fff;font-weight:700;transform:scaleX(0.9242);">Add widget</div>
<div class="b" style="left:355.00px;top:777.00px;width:546.00px;height:58.00px;background:#2b2b2b;border-radius:4px;box-shadow:0 0 14px rgba(0,0,0,.13)"></div>
<div class="b" style="left:367.00px;top:789.00px;width:191.00px;height:34.00px;border:1px solid #8fa3e8;border-radius:4px"></div>
<div class="b" style="left:368.00px;top:790.00px;width:99.00px;height:32.00px;background:#3d4252;border-radius:3px 0 0 3px"></div>
<div class="b" style="left:467.00px;top:790.00px;width:1.00px;height:32.00px;background:#8fa3e8"></div>
<div class="t" style="left:383.90px;top:798.00px;font-size:16.00px;color:#e2e7f7;font-weight:400;transform:scaleX(0.9822);-webkit-text-stroke:0.60px #e2e7f7;">Edit page</div>
<div class="t" style="left:483.70px;top:798.00px;font-size:16.00px;color:#9db2ff;font-weight:400;transform:scaleX(0.9989);-webkit-text-stroke:0.60px #9db2ff;">Preview</div>
<div class="b" style="left:574.00px;top:789.00px;width:96.00px;height:34.00px;border:1px solid #7b89c2;border-radius:4px"></div>
<svg class="ic" style="left:585.20px;top:795.80px;width:20.00px;height:20.00px;" viewBox="0 0 24 24"><path fill="#9db2ff" d="M3 10h11v2H3zm0-2h11V6H3zm0 8h7v-2H3zm15.01-3.13.71-.71c.39-.39 1.02-.39 1.41 0l.71.71c.39.39.39 1.02 0 1.41l-.71.71-2.12-2.12zm-.71.71-5.3 5.3V21h2.12l5.3-5.3-2.12-2.12z"/></svg>
<div class="t" style="left:614.00px;top:797.00px;font-size:16.50px;color:#9db2ff;font-weight:400;transform:scaleX(0.9552);-webkit-text-stroke:0.60px #9db2ff;">Menu</div>
<div class="b" style="left:686.00px;top:789.00px;width:91.00px;height:34.00px;background:#3f51b5;border-radius:4px"></div>
<svg class="ic" style="left:697.30px;top:795.40px;width:21.30px;height:21.30px;" viewBox="0 0 24 24"><path fill="#fff" d="M17 3H5c-1.11 0-2 .9-2 2v14c0 1.1.89 2 2 2h14c1.1 0 2-.9 2-2V7l-4-4zm-5 16c-1.66 0-3-1.34-3-3s1.34-3 3-3 3 1.34 3 3-1.34 3-3 3zm3-10H5V5h10v4z"/></svg>
<div class="t" style="left:726.20px;top:798.00px;font-size:15.75px;color:#fff;font-weight:400;transform:scaleX(0.9580);-webkit-text-stroke:0.55px #fff;">Save</div>
<div class="b" style="left:793.00px;top:789.00px;width:96.00px;height:34.00px;border:1px solid #a9585a;border-radius:4px"></div>
<svg class="ic" style="left:804.20px;top:795.50px;width:21.00px;height:21.00px;" viewBox="0 0 24 24"><path fill="#ef7676" d="M19 6.41L17.59 5 12 10.59 6.41 5 5 6.41 10.59 12 5 17.59 6.41 19 12 13.41 17.590 19 19 17.59 13.41 12z"/></svg>
<div class="t" style="left:833.20px;top:797.00px;font-size:17.00px;color:#ef7676;font-weight:400;transform:scaleX(0.9163);-webkit-text-stroke:0.60px #ef7676;">Close</div>
<div class="b" style="left:1238.00px;top:700.00px;width:8.00px;height:135.00px;background:#a9aaac;border-radius:4px"></div>
<div class="b" style="left:1214.00px;top:423.00px;width:40.00px;height:80.00px;background:#0a7bff"></div>
<div class="t" style="left:1234px;top:463px;font-size:15px;color:#fff;transform:translate(-50%,-50%) rotate(-90deg) scaleX(0.9);transform-origin:50% 50%;-webkit-text-stroke:0.3px #fff">Feedback</div>
</body></html>
